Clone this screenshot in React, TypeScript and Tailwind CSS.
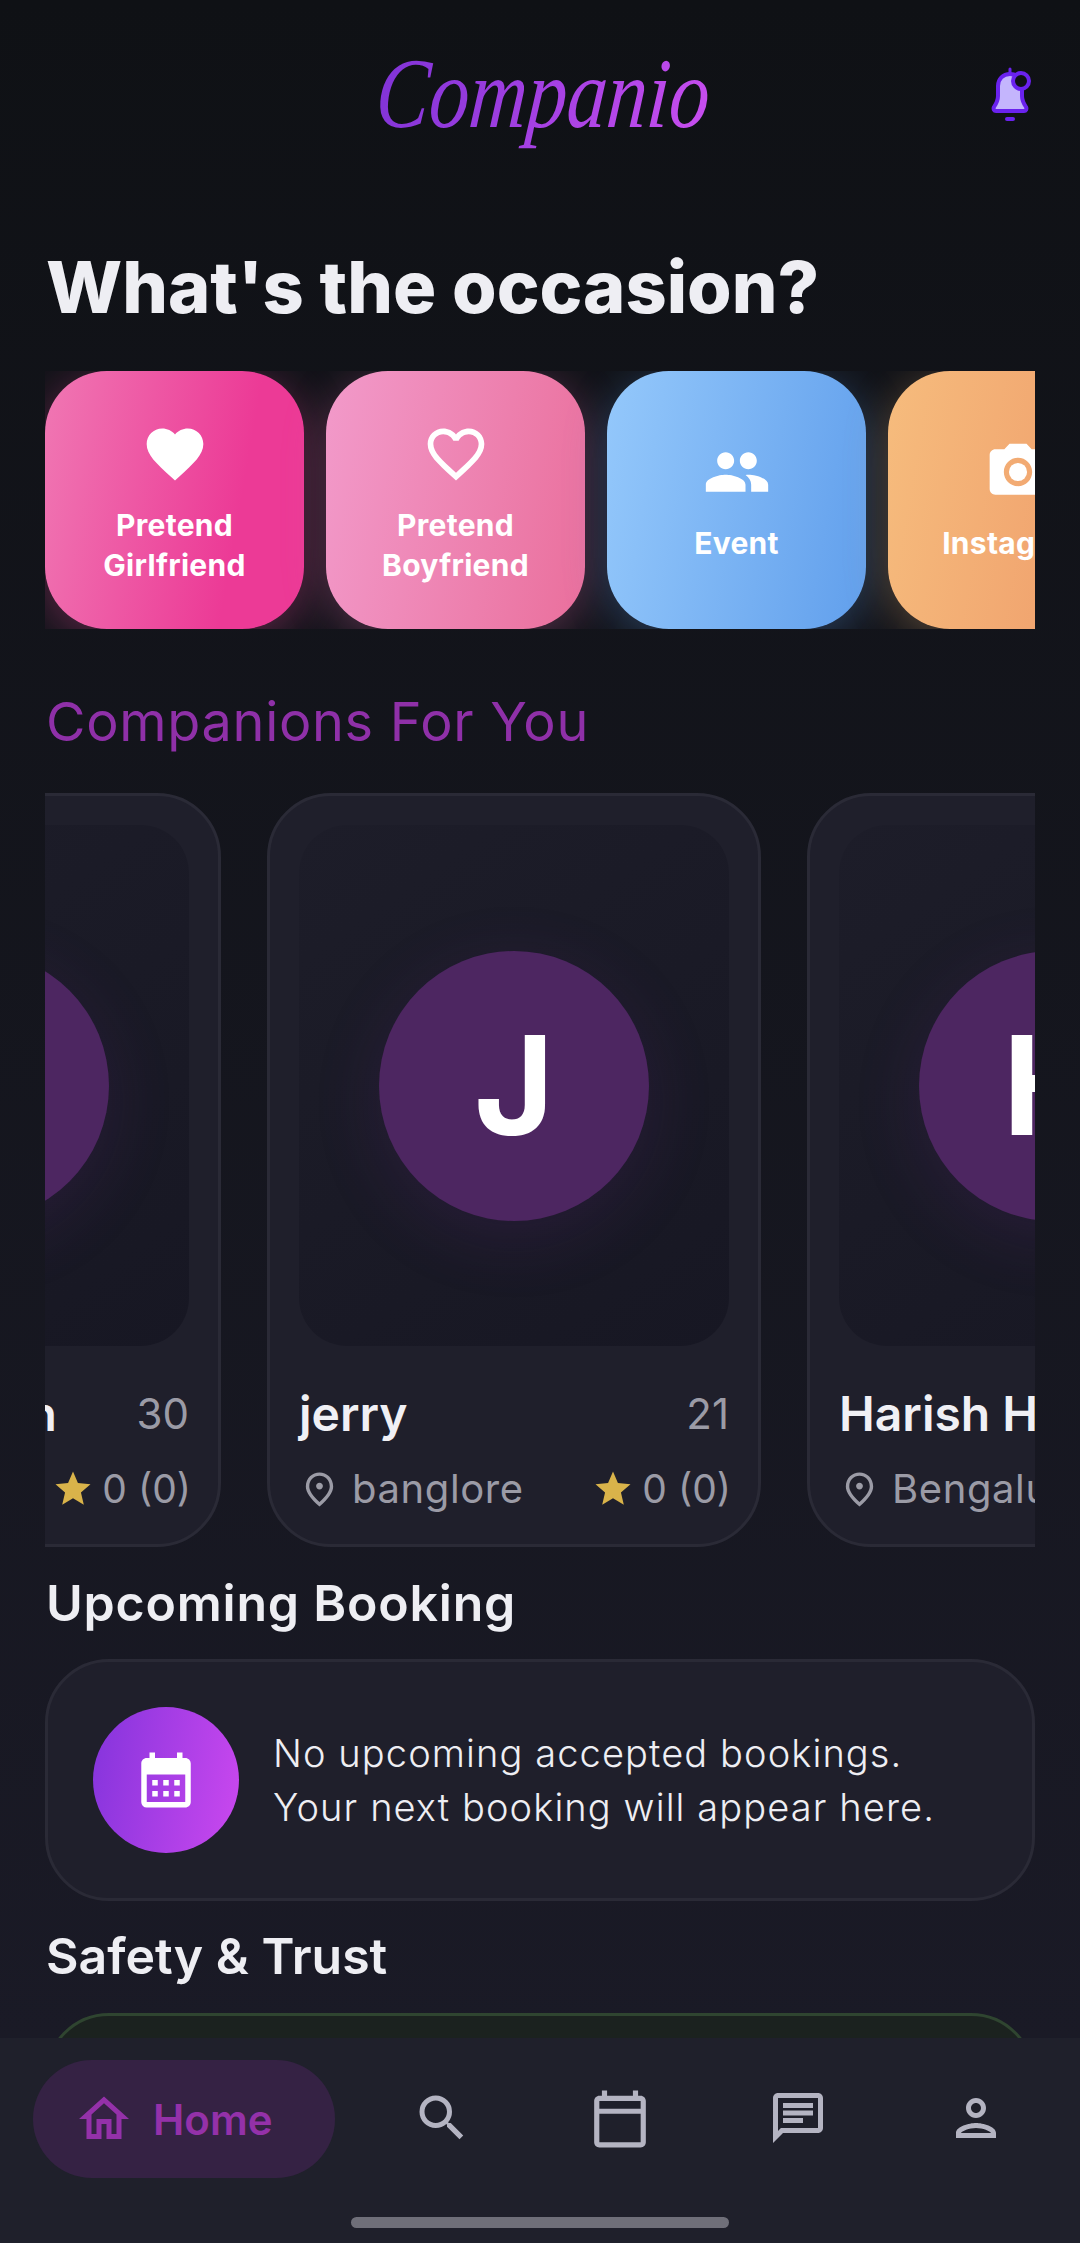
import type { ReactNode } from 'react';
import {
  MdCalendarMonth,
  MdCameraAlt,
  MdFavorite,
  MdFavoriteBorder,
  MdOutlineCalendarToday,
  MdOutlineChat,
  MdOutlineHome,
  MdOutlinePerson,
  MdOutlinePlace,
  MdPeople,
  MdSearch,
  MdStar,
} from 'react-icons/md';

const occasions = [
  { title: ['Pretend', 'Girlfriend'], icon: <MdFavorite size={68} />, bg: 'bg-[linear-gradient(100deg,#f077b3,#ec3a96_72%)] shadow-[0_8px_44px_rgba(236,72,153,0.36)]' },
  { title: ['Pretend', 'Boyfriend'], icon: <MdFavoriteBorder size={68} />, bg: 'bg-[linear-gradient(100deg,#f29aca,#ea6f9c)] shadow-[0_8px_44px_rgba(244,114,182,0.3)]' },
  { title: ['Event'], icon: <MdPeople size={68} />, bg: 'bg-[linear-gradient(100deg,#94c8fb,#619fec)] shadow-[0_8px_44px_rgba(96,165,250,0.3)]' },
  { title: ['Instagram'], icon: <MdCameraAlt size={68} />, bg: 'bg-[linear-gradient(100deg,#f6bc7d,#ee9868)] shadow-[0_8px_44px_rgba(251,191,120,0.3)]' },
];

const companions = [
  { name: 'Arjun Mohan', initial: 'A', age: 30, place: '' },
  { name: 'jerry', initial: 'J', age: 21, place: 'banglore' },
  { name: 'Harish H', initial: 'H', age: 26, place: 'Bengaluru' },
];

function OccasionCard({ title, icon, bg }: { title: string[]; icon: ReactNode; bg: string }) {
  return (
    <div className={`flex h-[258px] w-[259px] shrink-0 flex-col items-center justify-center rounded-[62px] text-white ${bg} ${title.length > 1 ? 'pt-[4px]' : ''}`}>
      {icon}
      <div className="mt-[17px] text-center text-[30px] leading-[40px] font-bold tracking-[0.3px]">
        {title.map((line) => (
          <div key={line}>{line}</div>
        ))}
      </div>
    </div>
  );
}

function CompanionCard({ name, initial, age, place }: { name: string; initial: string; age: number; place: string }) {
  return (
    <div className="h-[754px] w-[494px] shrink-0 rounded-[64px] border-[3px] border-[#2a2a36] bg-[#1f1f2b] px-[29px] pt-[29px]">
      <div className="flex h-[521px] items-center justify-center rounded-[48px] bg-[linear-gradient(145deg,#1d1d29,#171723)]">
        <div className="flex h-[270px] w-[270px] items-center justify-center rounded-full bg-[#4d2661] text-[137px] leading-none font-bold text-white shadow-[0_16px_70px_rgba(130,50,170,0.14)]">
          {initial}
        </div>
      </div>
      <div className="mt-[38px] flex items-center justify-between leading-[60px]">
        <span className="text-[48px] font-semibold whitespace-nowrap text-[#f0f0f5]">{name}</span>
        <span className="text-[42px] text-[#9b9ba6]">{age}</span>
      </div>
      <div className="mt-[20px] flex items-center justify-between text-[40px] leading-[50px] text-[#9b9ba6]">
        <div className="flex items-center gap-[12px] whitespace-nowrap">
          <MdOutlinePlace size={41} className="shrink-0" />
          <span className="tracking-[0.6px]">{place}</span>
        </div>
        <div className="-mr-[2px] flex items-center gap-[8px] whitespace-nowrap">
          <MdStar size={42} className="shrink-0 text-[#d9b34a]" />
          <span className="text-[39px]">0 (0)</span>
        </div>
      </div>
    </div>
  );
}

function BellIcon() {
  return (
    <svg width="48" height="62" viewBox="0 0 48 62" fill="none">
      <path d="M20 3v5" stroke="#6a22ee" strokeWidth="3" strokeLinecap="round" />
      <path
        d="M20 8C13 8 8 13 8 20V30C8 35 6 38 4 41C3 43 4 45 6 45H34C36 45 37 43 36 41C34 38 32 35 32 30V20C32 13 27 8 20 8Z"
        fill="#c4b5fd"
        stroke="#6a22ee"
        strokeWidth="4"
        strokeLinejoin="round"
      />
      <circle cx="31" cy="15" r="8" fill="#101116" stroke="#6a22ee" strokeWidth="4" />
      <rect x="15" y="51" width="10" height="4" rx="2" fill="#6a22ee" />
    </svg>
  );
}

export default function App() {
  return (
    <div className="flex h-[2243px] w-[1080px] flex-col overflow-hidden bg-[#1f202b] font-['Inter',sans-serif]">
      <main className="min-h-0 flex-1 overflow-hidden bg-[linear-gradient(180deg,#0f1115,#1a1a26)]">
        <header className="grid h-[243px] grid-cols-[1fr_auto_1fr] items-start">
          <div />
          <div className="mt-[55px] ml-[6px] -skew-x-6 scale-y-125 bg-[linear-gradient(110deg,#7e32d6,#cb4ff0)] bg-clip-text px-2 pb-3 font-['Liberation_Serif',serif] text-[80px] leading-none text-transparent italic">
            Companio
          </div>
          <div className="flex justify-end pt-[66px] pr-[42px]">
            <BellIcon />
          </div>
        </header>

        <h1 className="ml-[46px] text-[72px] leading-[88px] font-extrabold text-[#eeeef3]">What's the occasion?</h1>

        <div className="mx-[45px] mt-[40px] flex gap-[22px] overflow-hidden">
          {occasions.map((o) => (
            <OccasionCard key={o.title.join(' ')} title={o.title} icon={o.icon} bg={o.bg} />
          ))}
        </div>

        <h2 className="mt-[61px] ml-[46px] text-[54px] leading-[64px] font-normal tracking-[0.7px] text-[#8f30a8]">Companions For You</h2>

        <div className="mx-[45px] mt-[39px] flex gap-[46px] overflow-hidden">
          <div className="ml-[-318px] flex gap-[46px]">
            {companions.map((c) => (
              <CompanionCard key={c.name} {...c} />
            ))}
          </div>
        </div>

        <h2 className="mt-[26px] ml-[46px] text-[50px] leading-[60px] font-semibold tracking-[0.8px] text-[#eeeef3]">Upcoming Booking</h2>

        <section className="mx-[45px] mt-[26px] flex h-[242px] items-center rounded-[64px] border-[3px] border-[#2a2a36] bg-[#1f1f2b] pl-[45px]">
          <div className="flex h-[146px] w-[146px] shrink-0 items-center justify-center rounded-full bg-[linear-gradient(100deg,#8434dc,#cb48ef)] text-white">
            <MdCalendarMonth size={66} />
          </div>
          <p className="ml-[34px] text-[38px] leading-[54px] font-light tracking-[1.1px] text-[#eeeef3]">
            No upcoming accepted bookings.
            <br />
            Your next booking will appear here.
          </p>
        </section>

        <h2 className="mt-[25px] ml-[46px] text-[50px] leading-[60px] font-semibold text-[#eeeef3]">Safety &amp; Trust</h2>

        <section className="mx-[45px] mt-[27px] h-[200px] rounded-[64px] border-[3px] border-[#2f4530] bg-[#1b221f]" />
      </main>

      <nav className="h-[205px] shrink-0 bg-[#1f202b] pt-[22px]">
        <div className="flex items-center pl-[33px]">
          <div className="flex h-[118px] w-[302px] items-center rounded-full bg-[#352244] pl-[41px] text-[#9431a9]">
            <MdOutlineHome size={60} />
            <span className="ml-[19px] text-[42px] font-semibold">Home</span>
          </div>
          <div className="ml-[18px] flex text-[#b4b4c2]">
            <div className="flex w-[178px] justify-center"><MdSearch size={60} /></div>
            <div className="flex w-[178px] justify-center"><MdOutlineCalendarToday size={62} /></div>
            <div className="flex w-[178px] justify-center"><MdOutlineChat size={60} /></div>
            <div className="flex w-[178px] justify-center"><MdOutlinePerson size={60} /></div>
          </div>
        </div>
        <div className="mx-auto mt-[39px] h-[11px] w-[378px] rounded-full bg-[#6f6f79]" />
      </nav>
    </div>
  );
}
